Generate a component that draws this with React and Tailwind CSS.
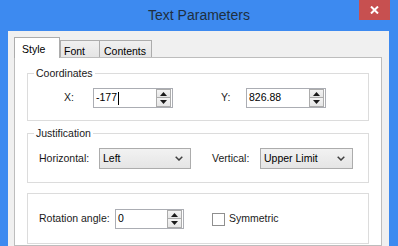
import React from 'react';

const SpinArrows = () => (
    <div className="flex flex-col w-[15px] h-[18px] my-0 mr-px border border-[#acacac]">
        <div className="h-[8px] flex items-center justify-center bg-linear-to-b from-[#f4f4f4] to-[#e6e6e6] border-b border-[#acacac]">
            <svg width="7" height="4" viewBox="0 0 7 4"><path d="M3.5 0 L7 4 L0 4 Z" fill="#1a1a1a" /></svg>
        </div>
        <div className="flex-1 flex items-center justify-center bg-linear-to-b from-[#f4f4f4] to-[#e6e6e6]">
            <svg width="7" height="4" viewBox="0 0 7 4"><path d="M0 0 L7 0 L3.5 4 Z" fill="#1a1a1a" /></svg>
        </div>
    </div>
)

const SpinBox = ({ value, width, caret }) => (
    <div className={`${width} h-[20px] flex items-center bg-white border border-[#abadb3]`}>
        <div className="flex-1 flex items-center pl-[2px] text-black">
            <span>{value}</span>
            {caret && <span className="ml-px w-px h-[13px] bg-black" />}
        </div>
        <SpinArrows />
    </div>
)

const Combo = ({ value, width }) => (
    <div className={`${width} h-[21px] flex items-center justify-between pl-[3px] pr-[7px] border border-[#acacac] bg-linear-to-b from-[#f2f2f2] to-[#e5e5e5] text-black`}>
        <span>{value}</span>
        <svg width="8" height="5" viewBox="0 0 8 5">
            <path d="M0.7 0.7 L4 4 L7.3 0.7" fill="none" stroke="#404040" strokeWidth="1.5" />
        </svg>
    </div>
)

const App = () => {
    return (
        <div className="w-[398px] h-[246px] overflow-hidden flex flex-col bg-[#3d8af0] font-['Liberation_Sans',Arial,sans-serif] text-[10.5px] text-[#1a1a1a]">
            {/* Title bar */}
            <div className="h-[31px] shrink-0 grid grid-cols-[39px_1fr_39px]">
                <div />
                <div className="self-center text-center text-[14px] text-[#1f2f40] pb-px">Text Parameters</div>
                <div className="self-start w-[31px] h-[20px] bg-[#c75050] flex items-center justify-center">
                    <svg width="9" height="8" viewBox="0 0 9 8">
                        <path d="M1 0.5 L8 7.5 M8 0.5 L1 7.5" stroke="#fff" strokeWidth="2" />
                    </svg>
                </div>
            </div>

            {/* Client area */}
            <div className="flex-1 ml-[8px] mr-[9px] bg-[#f0f0f0] pt-[6px] pl-[6px] pr-[7px] flex flex-col">
                {/* Tabs */}
                <div className="h-[20px] flex items-end shrink-0">
                    <div className="relative z-10 -mb-px w-[46px] h-[21px] pl-[7px] pt-[4px] bg-white border border-b-0 border-[#acacac] text-black">Style</div>
                    <div className="w-[40px] h-[17px] pl-[3px] pt-[3px] border border-b-0 border-[#acacac] bg-linear-to-b from-[#f0f0f0] to-[#e5e5e5] text-black">Font</div>
                    <div className="w-[52px] h-[17px] pl-[4px] pt-[3px] border border-b-0 border-l-0 border-[#acacac] bg-linear-to-b from-[#f0f0f0] to-[#e5e5e5] text-black">Contents</div>
                </div>

                {/* Panel */}
                <div className="flex-1 bg-white border border-[#bdbdbd] px-[12px] pt-[8px]">
                    <fieldset className="border border-[#dcdcdc] pt-[8px] pb-[12px]">
                        <legend className="ml-[6px] px-[2px] leading-[14px]">Coordinates</legend>
                        <div className="h-[20px] flex items-center pl-[36px]">
                            <span className="w-[29px]">X:</span>
                            <SpinBox value="-177" width="w-[80px]" caret />
                            <span className="ml-[48px] w-[25px]">Y:</span>
                            <SpinBox value="826.88" width="w-[80px]" />
                        </div>
                    </fieldset>

                    <fieldset className="mt-[5px] border border-[#dcdcdc] pt-[8px] pb-[13px]">
                        <legend className="ml-[6px] px-[2px] leading-[14px]">Justification</legend>
                        <div className="h-[21px] flex items-center pl-[11px]">
                            <span className="w-[60px]">Horizontal:</span>
                            <Combo value="Left" width="w-[92px]" />
                            <span className="ml-[21px] w-[48px]">Vertical:</span>
                            <Combo value="Upper Limit" width="w-[93px]" />
                        </div>
                    </fieldset>

                    <div className="mt-[10px] border border-[#dcdcdc] pt-[15px] pb-[14px]">
                        <div className="h-[20px] flex items-center pl-[11px]">
                            <span className="w-[76px]">Rotation angle:</span>
                            <SpinBox value="0" width="w-[69px]" />
                            <label className="ml-[28px] flex items-center gap-[4px]">
                                <span className="w-[13px] h-[13px] border border-[#8f8f8f] bg-white" />
                                <span>Symmetric</span>
                            </label>
                        </div>
                    </div>
                </div>
            </div>
        </div>
    );
};

export default App;
